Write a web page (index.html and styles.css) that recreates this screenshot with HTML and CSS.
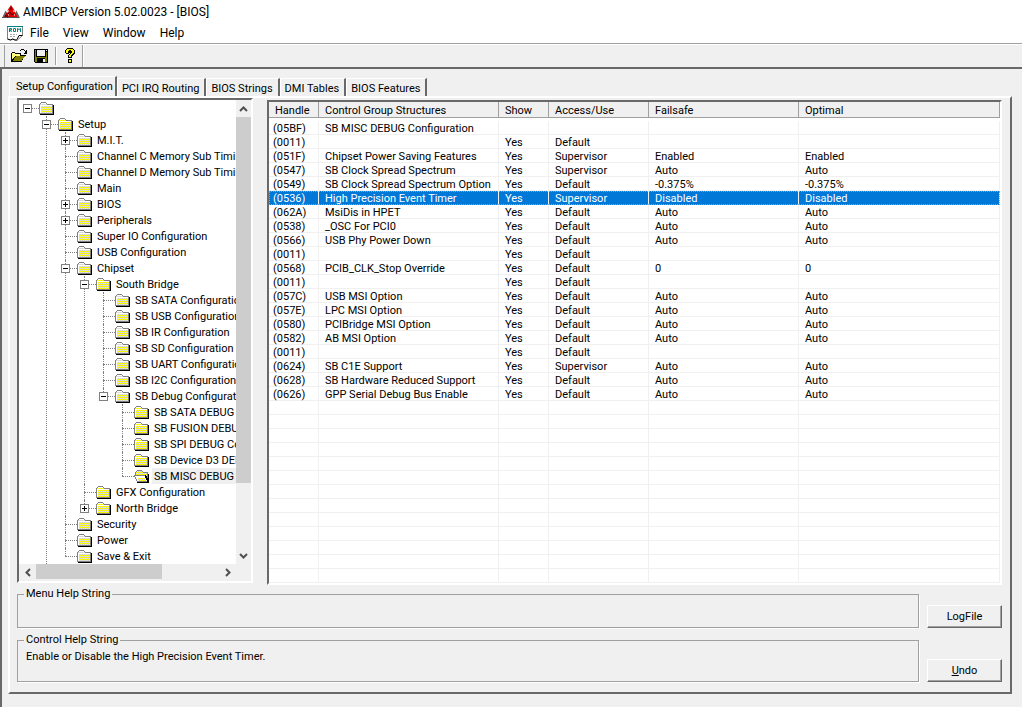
FILE: index.html
```
<!DOCTYPE html>
<html lang="en">
<head>
<meta charset="utf-8">
<title>AMIBCP Version 5.02.0023 - [BIOS]</title>
<link rel="stylesheet" href="styles.css">
</head>
<body>
<svg class="defs" aria-hidden="true">
  <defs>
    <pattern id="dither" width="2" height="2" patternUnits="userSpaceOnUse">
      <rect width="2" height="2" fill="#d4d4d4"/><rect width="1" height="1" fill="#ffff00"/><rect x="1" y="1" width="1" height="1" fill="#ffff00"/>
    </pattern>
    <symbol id="folder" viewBox="0 0 16 14" shape-rendering="crispEdges">
      <path d="M1 12h14v1H1zM14 3h1v10h-1z" fill="#000"/>
      <path d="M2 0h5v1h1v1h6v10H0V2h1V1h1z" fill="#808080"/>
      <path d="M2 1h5v1h1v1h5v8H1V2h1z" fill="url(#dither)"/>
      <path d="M2 1h5v1H2zM1 3h12v1H1zM1 3h1v8H1z" fill="#fff"/>
    </symbol>
    <symbol id="folder-open" viewBox="0 0 16 14" shape-rendering="crispEdges">
      <path d="M3 12h12v1H3zM14 4h1v9h-1z" fill="#000"/>
      <path d="M3 0h5v1h1v1h5v10H3v-1H2V9H1V7H0V5h1V2h1V1h1z" fill="#808080"/>
      <path d="M3 1h5v1h1v1h4v8H2V2h1z" fill="url(#dither)"/>
      <path d="M0 5h11v1h1v2h1v2h1v2H3v-1H2V9H1V7H0z" fill="#808080"/>
      <path d="M1 6h10v2h1v2h1v1H3V9H2V7H1z" fill="#fff"/>
      <path d="M4 8h7v2h1v1H5v-1H4z" fill="url(#dither)"/>
      <path d="M11 5h1v1h1v2h1v4h-1v-2h-1V8h-1z" fill="#000"/>
    </symbol>
  </defs>
</svg>
<div class="app">
  <header class="titlebar">
    <svg class="logo" width="18" height="14" viewBox="0 0 18 14"><path d="M9 0l4 6H5z" fill="#e00000"/><path d="M3.500 5.500L8 13H0zM14.500 5.500L18 13h-7z" fill="#666"/><path d="M6 5h6l4 8H5z" fill="#e80000"/><path d="M5 7l3 5H2z" fill="#c00000"/><path d="M9 2v3M6 9l2-2 2 3 2-2M3 11h3" stroke="#300" fill="none"/><path d="M5 6h2M11 6h2M6 10h1M12 10h1" stroke="#fff"/><path d="M0 12.500h18" stroke="#555" stroke-dasharray="5 1"/></svg>
    <h1 class="title">AMIBCP Version 5.02.0023 - [BIOS]</h1>
  </header>
  <nav class="menubar">
    <svg class="rom" width="16" height="15" viewBox="0 0 16 15" fill="none"><path d="M.5.5h15v9l-5 4.500H8l-2-1-2 1-3.500-1z" fill="#fff" stroke="#808080"/><path d="M15.500 9.500H12l-2 4M.5 13l3 1 2-1 2.500 1h2" stroke="#000"/><path d="M0 .5h16" stroke="#008080"/><path d="M2.500 6V2.500h2v1.500h-2m1 0l1 2M6.500 2.500h2v3h-2zM10.500 6V2.500l1.500 1 1.500-1V6" stroke="#008080"/><path d="M3 8.500h7M3 10.500h6" stroke="#aaa" stroke-dasharray="2 1"/></svg>
    <button type="button">File</button><button type="button">View</button><button type="button">Window</button><button type="button">Help</button>
  </nav>
  <div class="toolbar">
    <button type="button" aria-label="Open"><svg width="16" height="14" viewBox="0 0 16 14" shape-rendering="crispEdges"><path d="M0 4h1V3h3v1h6v2h5v1h-1v1h-1v1h-1v2h-1v2H0z" fill="#000"/><path d="M1 4h3v1h5v2H4v1H3v1H2v1H1z" fill="#ffff80"/><path d="M5 7h9v1h-1v1h-1v1h-1v2H2v-1h1V9h1V8h1z" fill="#808000"/><path d="M9 1h1v1H9zM10 0h3v1h-3zM13 1h1v1h-1zM14 2h1V1h1v4h-3V4h1z" fill="#000"/></svg></button>
    <button type="button" aria-label="Save"><svg width="14" height="14" viewBox="0 0 14 14" shape-rendering="crispEdges"><path d="M0 0h14v14H1v-1H0z" fill="#000"/><path d="M1 1h1v7h10V3h1v10H1z" fill="#808000"/><path d="M3 1h8v6H3zM12 1h1v1h-1z" fill="#f0f0f0"/><path d="M3 9h8v4H3z" fill="#000"/><path d="M9 10h2v3H9z" fill="#f0f0f0"/></svg></button>
    <span class="sep"></span>
    <button type="button" aria-label="About"><svg width="11" height="15" viewBox="0 0 11 15" shape-rendering="crispEdges"><path d="M2 0h6v1h1v1h1v4H9v1H8v1H7v2H3V7h1V6h1V5H4v1H1V5H0V2h1V1h1zM3 11h4v4H3z" fill="#000"/><path d="M2 1h6v1h1v3H8v1H7v1H6v2H4V7h1V6h1V5h1V3H6V2H4v1H3v2H1V2h1zM4 12h2v2H4z" fill="#ff0"/></svg></button>
    <span class="sep last"></span>
  </div>
  <main class="client">
    <div class="tabs" role="tablist">
      <button type="button" role="tab" class="tab active" aria-selected="true">Setup Configuration</button>
      <button type="button" role="tab" class="tab">PCI IRQ Routing</button>
      <button type="button" role="tab" class="tab">BIOS Strings</button>
      <button type="button" role="tab" class="tab">DMI Tables</button>
      <button type="button" role="tab" class="tab">BIOS Features</button>
    </div>
    <section class="panel">
      <div class="split">
        <div class="treebox">
          <div class="treeview"><ul class="tree" id="tree"></ul></div>
          <div class="vscroll"><button type="button" aria-label="Scroll up"><svg width="9" height="6" viewBox="0 0 9 6"><path d="M1 5l3.500-3.500L8 5"/></svg></button><div class="vtrack"><div class="vthumb"></div></div><button type="button" aria-label="Scroll down"><svg width="9" height="6" viewBox="0 0 9 6"><path d="M1 1l3.500 3.500L8 1"/></svg></button></div>
          <div class="hscroll"><button type="button" aria-label="Scroll left"><svg width="6" height="9" viewBox="0 0 6 9"><path d="M5 1L1.500 4.500 5 8"/></svg></button><div class="htrack"><div class="hthumb"></div></div><button type="button" aria-label="Scroll right"><svg width="6" height="9" viewBox="0 0 6 9"><path d="M1 1l3.500 3.500L1 8"/></svg></button></div>
        </div>
        <div class="listbox">
          <table class="list">
            <colgroup><col class="c50"><col class="c180"><col class="c50"><col class="c100"><col class="c150"><col></colgroup>
            <thead><tr><th>Handle</th><th>Control Group Structures</th><th>Show</th><th>Access/Use</th><th>Failsafe</th><th>Optimal</th></tr></thead>
            <tbody id="rows"></tbody>
          </table>
        </div>
      </div>
      <div class="help">
        <fieldset><legend>Menu Help String</legend></fieldset>
        <button type="button" class="push">LogFile</button>
      </div>
      <div class="help tall">
        <fieldset><legend>Control Help String</legend><p>Enable or Disable the High Precision Event Timer.</p></fieldset>
        <button type="button" class="push"><u>U</u>ndo</button>
      </div>
    </section>
  </main>
</div>
<script src="app.js"></script>
</body>
</html>
```
FILE: styles.css
```
* { box-sizing: border-box; }
body { margin: 0; background: #f0f0f0; color: #000; font: 11px/14px Roboto, "Liberation Sans", Arial, sans-serif; }
button { font: inherit; color: inherit; background: none; border: 0; padding: 0; margin: 0; }
ul { list-style: none; margin: 0; padding: 0; }
svg { display: block; flex: none; }
.defs { position: absolute; width: 0; height: 0; }
.app { display: flex; flex-direction: column; height: 100vh; min-height: 600px; }

.titlebar, .menubar { display: flex; align-items: center; background: #fff; font-size: 12px; }
.titlebar { height: 23px; padding-left: 2px; gap: 3px; }
.title { margin: 0; font-size: 12px; font-weight: 400; }
.menubar { height: 20px; padding-left: 7px; }
.menubar button { padding: 0 7px; }
.toolbar { display: flex; align-items: center; height: 24px; padding-left: 4px; border-top: 1px solid #a0a0a0; box-shadow: inset 0 1px #fff; }
.toolbar::before { content: ""; width: 1px; height: 22px; background: #a0a0a0; }
.toolbar button { padding: 0 0 0 6px; }
.toolbar button + button { padding-left: 7px; }
.sep { width: 2px; height: 18px; margin: 0 2px 0 7px; background: #a0a0a0; border-right: 1px solid #fff; }
.sep.last { height: 22px; margin-left: 6px; }

.client { flex: 1; min-height: 0; display: flex; flex-direction: column; padding: 7px 10px 13px 6px; border: solid #696969; border-width: 2px 0 0 2px; }
.tabs { display: flex; align-items: flex-end; height: 20px; padding-left: 1px; }
.tab { height: 18px; padding: 1px 5px 0 4px; line-height: 18px; border: 1px solid #fff; border-right: 2px solid #696969; border-bottom: 0; white-space: nowrap; }
.tab.active { height: 20px; padding: 0 2px 0 6px; line-height: 18px; }
.panel { flex: 1; min-height: 0; display: flex; flex-direction: column; gap: 6px; padding: 0 8px 10px 7px; border: solid; border-width: 2px; border-color: #fff #696969 #696969 #fff; }
.split { flex: 1; min-height: 0; display: flex; gap: 14px; margin-bottom: -3px; }

.treebox { flex: none; width: 236px; margin-bottom: 2px; display: grid; grid-template: minmax(0, 1fr) 17px / minmax(0, 1fr) 15px; background: #f0f0f0; border: 2px solid; border-color: #696969 #fff #fff #696969; }
.treeview { overflow: hidden; background: #fff; }
.tree { white-space: nowrap; }
.tree ul { margin-left: 19px; }
.tree li { position: relative; }
.tree li li::before { content: ""; position: absolute; left: 8px; top: 0; bottom: 0; border-left: 1px dotted #808080; }
.tree li li:last-child::before { bottom: auto; height: 8px; }
.tree li li.more::before { bottom: 0; height: auto; }
.node { display: flex; align-items: center; height: 16px; position: relative; padding-left: 20px; }
.node::before { content: ""; position: absolute; left: 8px; top: 8px; width: 12px; border-top: 1px dotted #808080; }
.toggle { position: absolute; left: 4px; top: 4px; width: 9px; height: 9px; border: 1px solid #808080; background: linear-gradient(#000, #000) center / 5px 1px no-repeat #fff; }
.toggle.plus { background: linear-gradient(#000, #000) center / 5px 1px no-repeat, linear-gradient(#000, #000) center / 1px 5px no-repeat #fff; }
.node svg { position: relative; margin-top: 2px; }
.label { margin-left: 2px; padding: 1px 2px 0; height: 16px; line-height: 16px; }
.label.sel { background: #f0f0f0; }

.vscroll, .hscroll { display: flex; }
.vscroll { flex-direction: column; }
.vscroll button, .hscroll button { flex: none; display: flex; align-items: center; justify-content: center; height: 17px; width: 17px; }
.vscroll button { width: 15px; }
.vscroll path, .hscroll path { fill: none; stroke: #505050; stroke-width: 2; }
.vtrack, .htrack { flex: 1; min-height: 0; }
.vthumb { height: 85%; background: #cdcdcd; }
.hthumb { width: 69%; height: 15px; background: #cdcdcd; }

.listbox { flex: 1; min-width: 0; margin-top: 2px; overflow: hidden; background: #fff; border: 2px solid; border-color: #696969 #fff #fff #696969; }
.list { width: 100%; table-layout: fixed; border-collapse: separate; border-spacing: 0; white-space: nowrap; }
.c50 { width: 50px; }
.c100 { width: 100px; }
.c150 { width: 150px; }
.c180 { width: 180px; }
.list th { height: 16px; padding: 2px 0 0 6px; line-height: 13px; text-align: left; font-weight: 400; background: #f0f0f0; border: solid; border-width: 0 1px 1px 0; border-color: #a0a0a0; }
.list thead::after { content: ""; display: block; height: 3px; }
.list td { height: 14px; padding: 2px 0 0 6px; line-height: 11px; border: solid #f0f0f0; border-width: 0 1px 1px 0; }
.list td:first-child { padding-left: 4px; }
.list tr.sel td { color: #fff; background: #0078d7; border-bottom-color: #0078d7; }
.list tr.sel { outline: 1px dotted #ff8728; outline-offset: -1px; }

.help { display: flex; align-items: flex-end; gap: 8px; height: 40px; flex: none; }
.help.tall { height: 48px; }
fieldset { flex: 1; min-width: 0; height: 100%; margin: 0; padding: 0 8px; border: 1px solid #a0a0a0; box-shadow: 1px 1px #fff; }
legend { margin-left: -2px; padding: 0 2px; height: 12px; line-height: 12px; background: #f0f0f0; }
fieldset p { margin: 4px 0 0; }
.push { width: 75px; height: 23px; border: 1px solid; border-color: #fff #696969 #696969 #fff; box-shadow: inset -1px -1px #a0a0a0; }
```
FILE: app.js
```
const menu = ["", "-", [
  ["Setup", "-more", [
    ["M.I.T.", "+"],
    ["Channel C Memory Sub Timing"],
    ["Channel D Memory Sub Timing"],
    ["Main"],
    ["BIOS", "+"],
    ["Peripherals", "+"],
    ["Super IO Configuration"],
    ["USB Configuration"],
    ["Chipset", "-", [
      ["South Bridge", "-", [
        ["SB SATA Configuration"],
        ["SB USB Configuration"],
        ["SB IR Configuration"],
        ["SB SD Configuration"],
        ["SB UART Configuration"],
        ["SB I2C Configuration"],
        ["SB Debug Configuration", "-", [
          ["SB SATA DEBUG Configuration"],
          ["SB FUSION DEBUG Configuration"],
          ["SB SPI DEBUG Configuration"],
          ["SB Device D3 DEBUG Configuration"],
          ["SB MISC DEBUG Configuration", "selected"]
        ]]
      ]],
      ["GFX Configuration"],
      ["North Bridge", "+"]
    ]],
    ["Security"],
    ["Power"],
    ["Save & Exit"]
  ]]
]];

function addNode(parent, [text, state = "", children]) {
  const li = document.createElement("li");
  if (state === "-more") li.className = "more";
  const node = document.createElement("div");
  node.className = "node";
  if (state[0] === "+" || state[0] === "-") {
    const toggle = document.createElement("button");
    toggle.type = "button";
    toggle.className = state === "+" ? "toggle plus" : "toggle";
    toggle.setAttribute("aria-label", state === "+" ? "Expand" : "Collapse");
    node.append(toggle);
  }
  const selected = state === "selected";
  node.insertAdjacentHTML("beforeend", `<svg width="16" height="14"><use href="#${selected ? "folder-open" : "folder"}"/></svg>`);
  if (text) {
    const label = document.createElement("span");
    label.className = selected ? "label sel" : "label";
    label.textContent = text;
    node.append(label);
  }
  li.append(node);
  if (children) {
    const ul = document.createElement("ul");
    children.forEach(child => addNode(ul, child));
    li.append(ul);
  }
  parent.append(li);
}
addNode(document.getElementById("tree"), menu);

const controls = [
  ["(05BF)", "SB MISC DEBUG Configuration"],
  ["(0011)", "", "Yes", "Default"],
  ["(051F)", "Chipset Power Saving Features", "Yes", "Supervisor", "Enabled", "Enabled"],
  ["(0547)", "SB Clock Spread Spectrum", "Yes", "Supervisor", "Auto", "Auto"],
  ["(0549)", "SB Clock Spread Spectrum Option", "Yes", "Default", "-0.375%", "-0.375%"],
  ["(0536)", "High Precision Event Timer", "Yes", "Supervisor", "Disabled", "Disabled"],
  ["(062A)", "MsiDis in HPET", "Yes", "Default", "Auto", "Auto"],
  ["(0538)", "_OSC For PCI0", "Yes", "Default", "Auto", "Auto"],
  ["(0566)", "USB Phy Power Down", "Yes", "Default", "Auto", "Auto"],
  ["(0011)", "", "Yes", "Default"],
  ["(0568)", "PCIB_CLK_Stop Override", "Yes", "Default", "0", "0"],
  ["(0011)", "", "Yes", "Default"],
  ["(057C)", "USB MSI Option", "Yes", "Default", "Auto", "Auto"],
  ["(057E)", "LPC MSI Option", "Yes", "Default", "Auto", "Auto"],
  ["(0580)", "PCIBridge MSI Option", "Yes", "Default", "Auto", "Auto"],
  ["(0582)", "AB MSI Option", "Yes", "Default", "Auto", "Auto"],
  ["(0011)", "", "Yes", "Default"],
  ["(0624)", "SB C1E Support", "Yes", "Supervisor", "Auto", "Auto"],
  ["(0628)", "SB Hardware Reduced Support", "Yes", "Default", "Auto", "Auto"],
  ["(0626)", "GPP Serial Debug Bus Enable", "Yes", "Default", "Auto", "Auto"]
];
const body = document.getElementById("rows");
for (let i = 0; i < 33; i++) {
  const row = body.insertRow();
  const data = controls[i] || [];
  if (data[0] === "(0536)") row.className = "sel";
  for (let c = 0; c < 6; c++) row.insertCell().textContent = data[c] || "";
}
```
